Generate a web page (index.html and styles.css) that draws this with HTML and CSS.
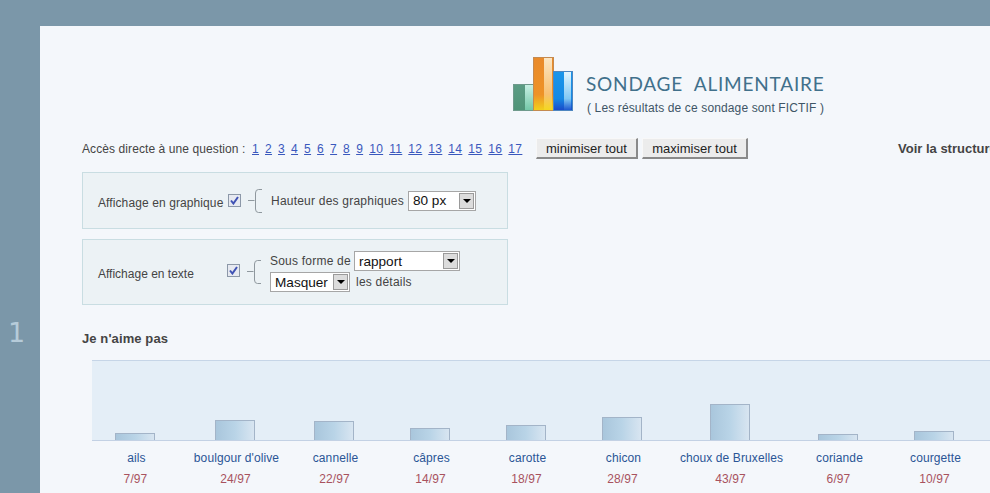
FILE: index.html
```html
<!DOCTYPE html>
<html lang="fr">
<head>
<meta charset="utf-8">
<title>Sondage alimentaire</title>
<link rel="stylesheet" href="styles.css">
</head>
<body>
<div class="qnum">1</div>
<main class="card">
  <header class="brand">
    <svg class="logo" width="60" height="54" viewBox="0 0 60 54">
      <defs>
        <linearGradient id="g1" x1="0" y1="0" x2="0" y2="1"><stop offset="0" stop-color="#5c9c84"/><stop offset="1" stop-color="#4f9478"/></linearGradient>
        <linearGradient id="g1b" x1="0" y1="0" x2="0" y2="1"><stop offset="0" stop-color="#c8f0e4"/><stop offset="1" stop-color="#74c8a8"/></linearGradient>
        <linearGradient id="g2" x1="0" y1="0" x2="0" y2="1"><stop offset="0" stop-color="#e98a2a"/><stop offset=".7" stop-color="#ee9226"/><stop offset="1" stop-color="#f2d21c"/></linearGradient>
        <linearGradient id="g2b" x1="0" y1="0" x2="0" y2="1"><stop offset="0" stop-color="#fbe6c4"/><stop offset=".7" stop-color="#f8c070"/><stop offset="1" stop-color="#f4d820"/></linearGradient>
        <linearGradient id="g3" x1="0" y1="0" x2="0" y2="1"><stop offset="0" stop-color="#1a96ea"/><stop offset=".7" stop-color="#1588e4"/><stop offset="1" stop-color="#1a48c8"/></linearGradient>
        <linearGradient id="g3b" x1="0" y1="0" x2="0" y2="1"><stop offset="0" stop-color="#e4f6fe"/><stop offset=".7" stop-color="#80c8f4"/><stop offset="1" stop-color="#1e58d0"/></linearGradient>
      </defs>
      <rect x=".5" y="27.5" width="20" height="26" fill="url(#g1)" stroke="#6f9a8c"/>
      <rect x="12" y="28" width="8" height="25" fill="url(#g1b)"/>
      <rect x="20.5" y=".5" width="20" height="53" fill="url(#g2)" stroke="#c48a50"/>
      <rect x="31" y="1" width="8" height="52" fill="url(#g2b)"/>
      <rect x="40.5" y="14.5" width="19" height="39" fill="url(#g3)" stroke="#4e86c0"/>
      <rect x="51" y="15" width="7" height="38" fill="url(#g3b)"/>
    </svg>
    <div class="brand-text">
      <h1 class="title">SONDAGE&nbsp; ALIMENTAIRE</h1>
      <p class="subtitle">( Les résultats de ce sondage sont FICTIF )</p>
    </div>
  </header>

  <nav class="toolbar">
    <span class="nav-label">Accès directe à une question :</span>
    <span class="nav-links">
      <a href="#">1</a><a href="#">2</a><a href="#">3</a><a href="#">4</a><a href="#">5</a><a href="#">6</a><a href="#">7</a><a href="#">8</a><a href="#">9</a><a href="#">10</a><a href="#">11</a><a href="#">12</a><a href="#">13</a><a href="#">14</a><a href="#">15</a><a href="#">16</a><a href="#">17</a>
    </span>
    <span class="buttons">
      <button class="btn btn-min" type="button">minimiser tout</button>
      <button class="btn btn-max" type="button">maximiser tout</button>
    </span>
    <a class="structure" href="#">Voir la structure du sondage</a>
  </nav>

  <section class="panel panel-graph">
    <span class="panel-label">Affichage en graphique</span>
    <span class="check"><svg width="9" height="9" viewBox="0 0 9 9"><path d="M1 4.5 3.4 7.5 8 1" fill="none" stroke="#3f52b4" stroke-width="2"/></svg></span>
    <svg class="brace" width="15" height="24" viewBox="0 0 15 24"><path d="M0 11.5H6.5M14 .5H10.5Q7.5 .5 7.5 4V20Q7.5 23.5 10.5 23.5H14" fill="none" stroke="#8f989e"/></svg>
    <span class="opt-text">Hauteur des graphiques</span>
    <span class="combo combo-height"><select><option>80 px</option></select><i class="arrow"></i></span>
  </section>

  <section class="panel panel-text">
    <span class="panel-label label-text">Affichage en texte</span>
    <span class="check"><svg width="9" height="9" viewBox="0 0 9 9"><path d="M1 4.5 3.4 7.5 8 1" fill="none" stroke="#3f52b4" stroke-width="2"/></svg></span>
    <svg class="brace" width="15" height="24" viewBox="0 0 15 24"><path d="M0 11.5H6.5M14 .5H10.5Q7.5 .5 7.5 4V20Q7.5 23.5 10.5 23.5H14" fill="none" stroke="#8f989e"/></svg>
    <div class="opt-rows">
      <div class="opt-row">
        <span class="opt-text">Sous forme de</span>
        <span class="combo combo-form"><select><option>rapport</option></select><i class="arrow"></i></span>
      </div>
      <div class="opt-row">
        <span class="combo combo-hide"><select><option>Masquer</option></select><i class="arrow"></i></span>
        <span class="opt-text">les détails</span>
      </div>
    </div>
  </section>

  <h2 class="question">Je n'aime pas</h2>

  <section class="chart">
    <div class="plot">
      <div class="col"><div class="bar" style="height:7px"></div></div>
      <div class="col"><div class="bar" style="height:20px"></div></div>
      <div class="col"><div class="bar" style="height:19px"></div></div>
      <div class="col"><div class="bar" style="height:12px"></div></div>
      <div class="col"><div class="bar" style="height:15px"></div></div>
      <div class="col"><div class="bar" style="height:23px"></div></div>
      <div class="col"><div class="bar" style="height:36px"></div></div>
      <div class="col"><div class="bar" style="height:6px"></div></div>
      <div class="col"><div class="bar" style="height:9px"></div></div>
    </div>
    <div class="legend">
      <div class="item"><span class="name">ails</span><span class="val">7/97</span></div>
      <div class="item"><span class="name">boulgour d'olive</span><span class="val">24/97</span></div>
      <div class="item"><span class="name">cannelle</span><span class="val">22/97</span></div>
      <div class="item"><span class="name">câpres</span><span class="val">14/97</span></div>
      <div class="item"><span class="name">carotte</span><span class="val">18/97</span></div>
      <div class="item"><span class="name">chicon</span><span class="val">28/97</span></div>
      <div class="item"><span class="name">choux de Bruxelles</span><span class="val">43/97</span></div>
      <div class="item"><span class="name">coriande</span><span class="val">6/97</span></div>
      <div class="item"><span class="name">courgette</span><span class="val">10/97</span></div>
    </div>
  </section>
</main>
</body>
</html>
```
FILE: styles.css
```css
* { box-sizing: border-box; }
html, body { margin: 0; height: 493px; overflow: hidden; }
body {
  position: relative;
  background: #7b97a9;
  font: 12px "Liberation Sans", Arial, sans-serif;
  color: #444;
  padding: 26px 0 0 40px;
}
.qnum {
  position: absolute;
  left: 8px;
  top: 318px;
  font: 27px/30px "DejaVu Sans", sans-serif;
  color: #b6cbd9;
}
.card {
  width: 1300px;
  height: 600px;
  background: #f4f7fb;
  padding: 31px 0 0 42px;
}
.brand { display: flex; margin-left: 431px; height: 54px; }
.logo { flex: none; }
.brand-text { margin: 17px 0 0 13px; }
.title {
  margin: 0;
  font: 400 19px/20px "Lato", sans-serif;
  letter-spacing: .8px;
  color: #41708b;
  white-space: nowrap;
}
.subtitle {
  margin: 7px 0 0 1px;
  font-size: 12px;
  line-height: 14px;
  letter-spacing: .13px;
  color: #3e5566;
  white-space: nowrap;
}
.toolbar {
  display: flex;
  align-items: center;
  margin-top: 27px;
  height: 21px;
  white-space: nowrap;
}
.nav-label { width: 170px; letter-spacing: .09px; }
.nav-links { display: flex; gap: 6px; width: 284px; letter-spacing: .33px; }
.nav-links a { color: #3a58bd; }
.buttons { display: flex; gap: 4px; }
.btn {
  height: 21px;
  padding: 0;
  background: #ececec;
  border: 0;
  border-right: 2px solid #8a8a8a;
  border-bottom: 2px solid #8a8a8a;
  border-top: 1px solid #f8f8f8;
  border-left: 1px solid #f8f8f8;
  font: 13px "Liberation Sans", Arial, sans-serif;
  color: #222;
}
.btn-min { width: 102px; }
.btn-max { width: 106px; }
.structure {
  margin-left: 150px;
  font-weight: bold;
  font-size: 13px;
  color: #444;
  text-decoration: none;
}
.panel {
  display: flex;
  align-items: center;
  width: 426px;
  margin-top: 13px;
  padding-left: 15px;
  background: #ecf2f5;
  border: 1px solid #c9dde2;
}
.panel-graph { height: 57px; }
.panel-text { height: 66px; margin-top: 10px; }
.panel-label { width: 130px; white-space: nowrap; letter-spacing: .1px; }
.label-text { width: 129px; letter-spacing: 0; }
.check {
  display: flex;
  align-items: center;
  justify-content: center;
  flex: none;
  width: 13px;
  height: 13px;
  background: #e6e9f0;
  border: 1px solid #8c98a8;
}
.brace { flex: none; margin: 1px 8px 0 7px; }
.panel-graph .check { margin-top: -1px; }
.panel-text .check { margin-top: -3px; }
.panel-text .brace { margin-top: 0; margin-right: 8px; }
.opt-text { letter-spacing: .22px; white-space: nowrap; }
.panel-graph .opt-text { margin: 0 4px 0 0; }
.panel-graph .panel-label { margin-top: 5px; }
.panel-text .panel-label { margin-top: 3px; }
.opt-rows { display: flex; flex-direction: column; gap: 1px; margin-top: -1px; }
.opt-row { display: flex; align-items: center; gap: 3px; height: 20px; white-space: nowrap; }
.opt-row .combo-hide { margin-right: 3px; }
.combo { position: relative; display: block; flex: none; height: 20px; }
.combo select {
  display: block;
  appearance: none;
  width: 100%;
  height: 100%;
  padding: 0 0 0 4px;
  background: #fff;
  border: 1px solid #a6a6a6;
  border-radius: 0;
  font: 13.6px "Liberation Sans", Arial, sans-serif;
  color: #111;
}
.combo-height { width: 68px; }
.combo-form { width: 106px; }
.combo-hide { width: 80px; }
.arrow {
  position: absolute;
  right: 2px;
  top: 2px;
  width: 15px;
  height: 16px;
  background: #dcdcdc;
  border: 1px solid #9a9a9a;
}
.arrow::after {
  content: "";
  position: absolute;
  left: 3px;
  top: 5px;
  border: 4px solid transparent;
  border-top: 4px solid #000;
  border-bottom: 0;
}
.question {
  margin: 26px 0 0;
  font: bold 13px/15px "Liberation Sans", Arial, sans-serif;
  letter-spacing: .1px;
  color: #444;
}
.chart { margin: 14px 0 0 10px; width: 898px; }
.plot, .legend {
  display: grid;
  grid-template-columns: 86px 114px 84px 108px 84px 108px 108px 108px 84px 14px;
}
.plot {
  height: 81px;
  background: #e4eef7;
  border-top: 1px solid #c6d5e7;
  border-bottom: 1px solid #c3d1e4;
  align-items: end;
}
.col { display: flex; justify-content: center; }
.bar {
  width: 40px;
  background: linear-gradient(90deg, #a9c6dc, #b9d4e7 50%, #d8e5f1);
  border: 1px solid #a3b4c8;
  border-bottom: 0;
}
.legend { margin-top: 10px; }
.item {
  display: flex;
  flex-direction: column;
  align-items: center;
  gap: 7px;
  line-height: 14px;
  white-space: nowrap;
  letter-spacing: .1px;
}
.name { color: #2a5596; padding-left: 3px; }
.val { color: #a8525e; padding-left: 1px; }
```
